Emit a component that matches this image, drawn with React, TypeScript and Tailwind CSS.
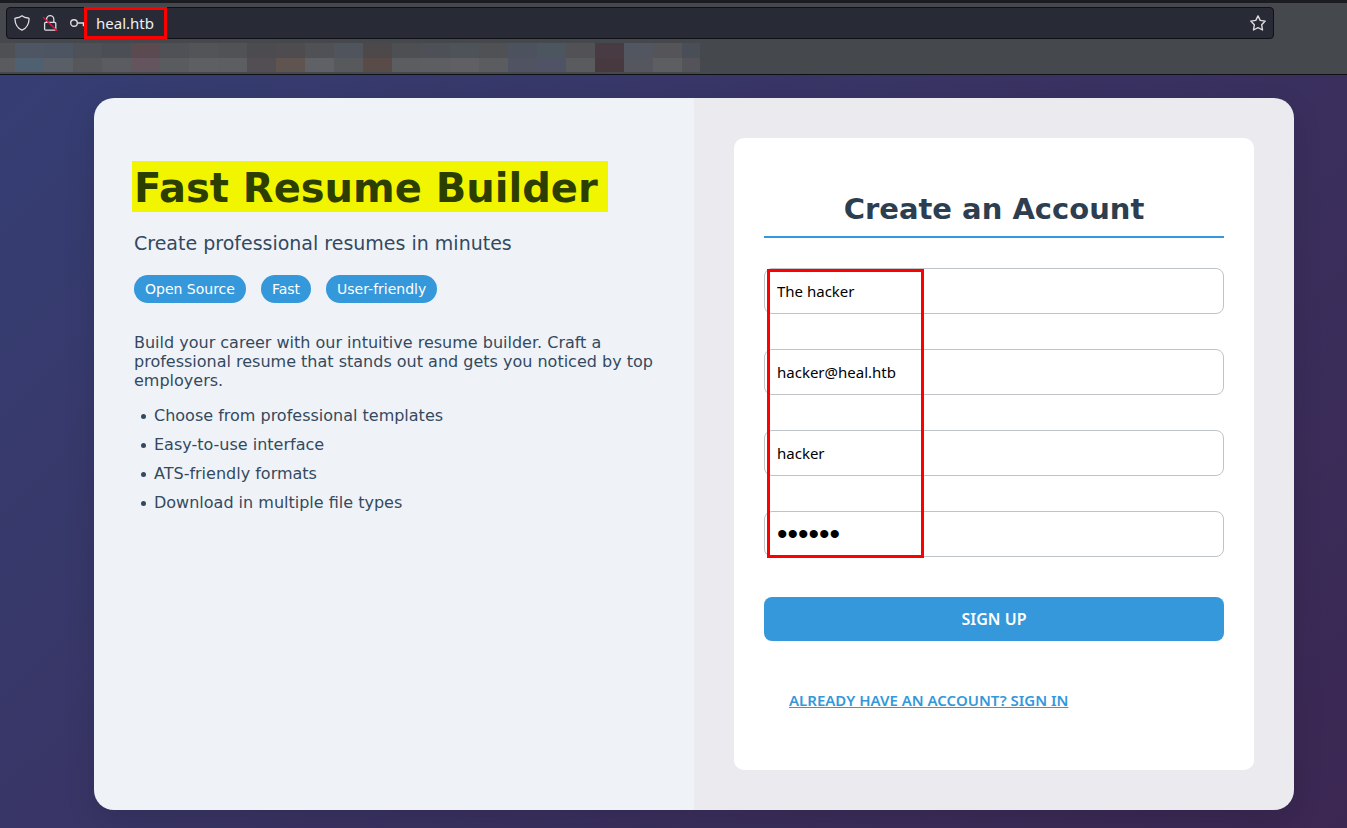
import { useState } from "react";

const topTiles = [
  "#4f5053", "#4e5664", "#4d5562", "#4e5157", "#4b4e54", "#5b4a50", "#505156", "#535457", "#515256", "#4c4b50",
  "#4f4c50", "#505155", "#50545c", "#4d484a", "#4e4f52", "#4d5057", "#4e5259", "#505155", "#4c525e", "#4b565e",
  "#525256", "#493b43", "#525660", "#555559", "#4a4e56",
];

const bottomTiles = [
  "#5a5b5f", "#4f6070", "#595e67", "#56575b", "#5a5c61", "#63545d", "#5a5b5f", "#5e5f63", "#5d5e62", "#524e53",
  "#5f5450", "#606166", "#58595d", "#594b47", "#5c5d61", "#5d5e62", "#5f5f64", "#5b5c60", "#505462", "#505266",
  "#5a5b5f", "#48383f", "#56565f", "#5d5e62", "#54535a",
];

function TileRow({ colors, height }: { colors: string[]; height: string }) {
  return (
    <div className={`flex ${height}`}>
      {colors.map((color, i) => (
        <span
          key={i}
          className="w-[29px] shrink-0 first:w-[15px] last:w-[18px]"
          style={{ backgroundColor: color }}
        />
      ))}
    </div>
  );
}

function ShieldIcon() {
  return (
    <svg viewBox="0 0 16 16" className="size-4" fill="none" stroke="#dddde1" strokeWidth="1.3" strokeLinejoin="round">
      <path d="M8 .8C6.300 2.200 3.700 2.900 1.800 3c-.6 0-1 .4-.9 1 .3 5.200 2.500 9.300 7.100 11.200 4.600-1.900 6.800-6 7.100-11.200 0-.6-.3-1-.9-1C12.300 2.900 9.700 2.200 8 .8Z" />
    </svg>
  );
}

function LockIcon() {
  return (
    <svg viewBox="0 0 16 16" className="size-4" fill="none" strokeLinecap="round">
      <path
        d="M4.600 7.200V4.300a3.600 3.600 0 0 1 7.200 0v2.900M3.600 7.400h9.200c.6 0 1 .4 1 1v5.700c0 .6-.4 1-1 1H3.600c-.6 0-1-.4-1-1V8.400c0-.6.4-1 1-1Z"
        stroke="#dddde1"
        strokeWidth="1.3"
      />
      <path d="M1.500 2.500 14.900 15.700" stroke="#e2123f" strokeWidth="1.500" />
    </svg>
  );
}

function KeyIcon() {
  return (
    <svg viewBox="0 0 16 16" className="size-4" fill="none" stroke="#dddde1" strokeWidth="1.4">
      <circle cx="4" cy="8" r="3.300" />
      <path d="M7.300 8H16M13.400 8v3.200" />
    </svg>
  );
}

function StarIcon() {
  return (
    <svg viewBox="0 0 16 16" className="size-4" fill="none" stroke="#dddde1" strokeWidth="1.4" strokeLinejoin="round">
      <path d="M8 .9 10.200 5.400 15.200 6.100 11.700 9.800 12.500 15 8 12.700 3.500 15 4.300 9.800.8 6.100 5.800 5.400Z" />
    </svg>
  );
}

function BrowserBar() {
  const [url, setUrl] = useState("heal.htb");
  return (
    <header className="border-b border-[#101116] bg-[#45484d]">
      <div className="h-[3px] bg-[#1b1c21]" />
      <div className="pt-1 pr-[73px] pl-1.5">
        <div className="flex h-8 items-center rounded border border-[#101116] bg-[#282a35] px-[7px]">
          <div className="flex gap-3">
            <ShieldIcon />
            <LockIcon />
            <KeyIcon />
          </div>
          <div className="relative ml-2.5 flex-1">
            <input
              aria-label="Address"
              value={url}
              onChange={(e) => setUrl(e.target.value)}
              className="block w-full bg-transparent font-['Noto_Sans',sans-serif] text-[15px] leading-5 text-[#f0f0f2] outline-none"
            />
            <span className="pointer-events-none absolute -top-1.5 -left-3 h-8 w-[83px] border-3 border-[#ff0000]" />
          </div>
          <button type="button" aria-label="Bookmark this page">
            <StarIcon />
          </button>
        </div>
      </div>
      <div className="mt-1 mb-0.5 overflow-hidden">
        <TileRow colors={topTiles} height="h-[15px]" />
        <TileRow colors={bottomTiles} height="h-[14px]" />
      </div>
    </header>
  );
}

const tags = ["Open Source", "Fast", "User-friendly"];

const features = [
  "Choose from professional templates",
  "Easy-to-use interface",
  "ATS-friendly formats",
  "Download in multiple file types",
];

const fields = [
  { label: "Full name", type: "text", value: "The hacker" },
  { label: "Email", type: "email", value: "hacker@heal.htb" },
  { label: "Username", type: "text", value: "hacker" },
  { label: "Password", type: "password", value: "hacker" },
];

function Intro() {
  return (
    <section className="flex-1 bg-[#eff3f8] px-10 pt-[63px] pb-10 text-[#34495e]">
      <h1 className="-ml-0.5 text-[40px] leading-[47px] font-bold">
        <mark className="block w-fit bg-[#f2f500] pt-1 pr-2.5 pl-0.5 text-[#2d3e02]">Fast Resume Builder</mark>
      </h1>
      <p className="mt-[19px] text-[19px] leading-6">Create professional resumes in minutes</p>
      <ul className="mt-5 flex flex-wrap gap-[15px]">
        {tags.map((tag) => (
          <li key={tag} className="rounded-full bg-[#3498db] px-[11px] text-[14px] leading-7 text-white">
            {tag}
          </li>
        ))}
      </ul>
      <p className="mt-[30px] text-[16px] leading-[19px]">
        Build your career with our intuitive resume builder. Craft a professional resume that stands out and gets you
        noticed by top employers.
      </p>
      <ul className="mt-4 space-y-2.5 pl-[7px] text-[16px] leading-[19px]">
        {features.map((feature) => (
          <li
            key={feature}
            className="flex items-center gap-2 before:mt-0.5 before:size-[5px] before:rounded-full before:bg-[#34495e]"
          >
            {feature}
          </li>
        ))}
      </ul>
    </section>
  );
}

function SignUp() {
  return (
    <section className="flex-1 bg-[#ebebef] p-10">
      <form
        className="rounded-[10px] bg-white px-[30px] pt-[54px] pb-[60px]"
        onSubmit={(e) => e.preventDefault()}
      >
        <h2 className="border-b-2 border-[#3498db] pb-2.5 text-center text-[29px] leading-[34px] font-bold text-[#2c3e50]">
          Create an Account
        </h2>
        <div className="relative mt-[30px] space-y-[35px]">
          {fields.map((field) => (
            <input
              key={field.label}
              aria-label={field.label}
              type={field.type}
              defaultValue={field.value}
              className={
                field.type === "password"
                  ? "block h-[46px] w-full rounded-lg border border-[#bdc3c7] bg-white px-3 font-['Liberation_Sans',sans-serif] text-[30px] text-black outline-none"
                  : "block h-[46px] w-full rounded-lg border border-[#bdc3c7] bg-white px-3 font-['Noto_Sans',sans-serif] text-[15px] text-black outline-none"
              }
            />
          ))}
          <span className="pointer-events-none absolute top-px left-[3px] h-[289px] w-[157px] border-3 border-[#ff0000]" />
        </div>
        <button
          type="submit"
          className="mt-10 block h-11 w-full rounded-lg bg-[#3498db] font-['Noto_Sans',sans-serif] text-[16px] font-semibold text-white"
        >
          SIGN UP
        </button>
        <a
          href="#sign-in"
          className="mt-[49px] ml-[25px] block w-fit font-['Noto_Sans',sans-serif] text-[15px] leading-5 font-semibold text-[#3498db] underline"
        >
          ALREADY HAVE AN ACCOUNT? SIGN IN
        </a>
      </form>
    </section>
  );
}

export default function App() {
  return (
    <div className="flex min-h-screen flex-col font-['DejaVu_Sans',sans-serif]">
      <BrowserBar />
      <main className="flex-1 bg-linear-135 from-[#353e73] to-[#3b2752] pt-[23px] pr-[53px] pb-[18px] pl-[94px]">
        <div className="flex max-w-[1200px] overflow-hidden rounded-[20px] shadow-[0_10px_30px_rgba(0,0,0,0.12)]">
          <Intro />
          <SignUp />
        </div>
      </main>
    </div>
  );
}
